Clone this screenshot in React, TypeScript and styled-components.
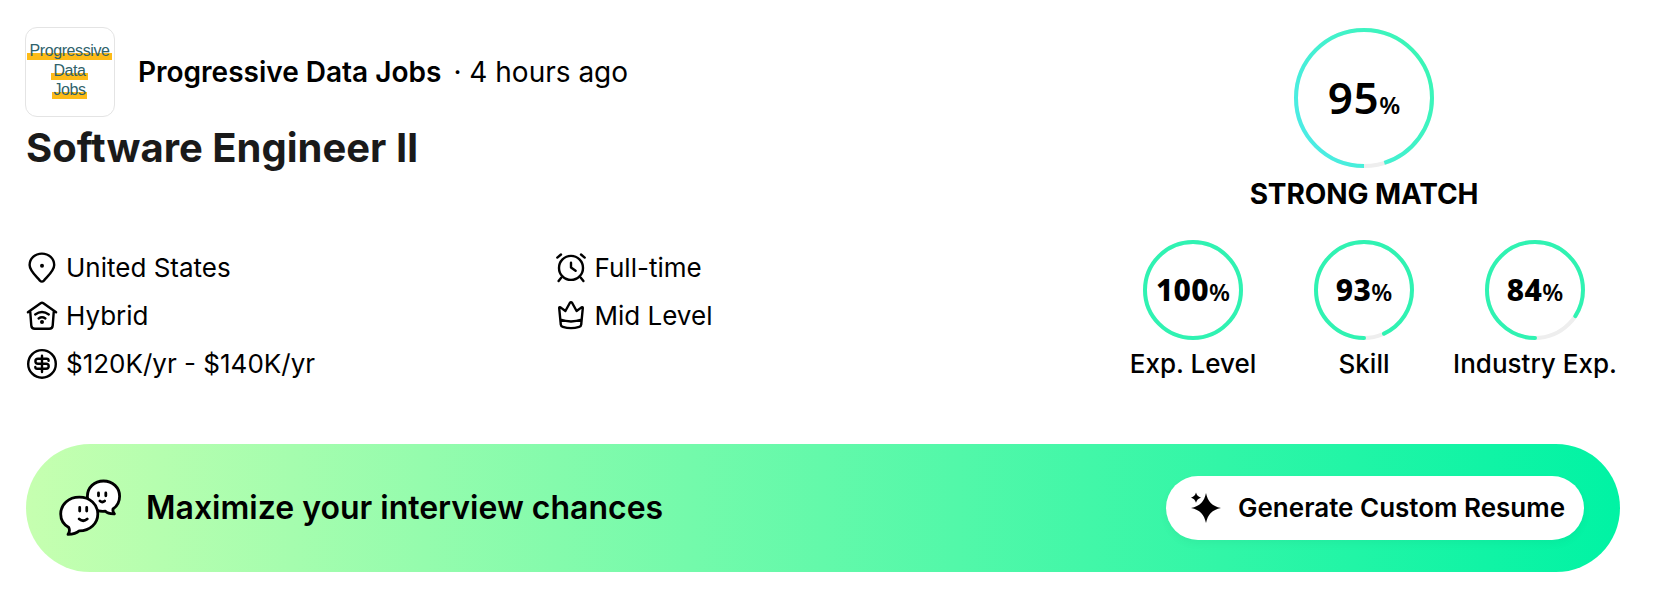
import React from "react";
import styled, { createGlobalStyle } from "styled-components";

const GlobalStyle = createGlobalStyle`
  * { box-sizing: border-box; }
  body {
    margin: 0;
    background: #fff;
    color: #000;
    font-family: Inter, "Liberation Sans", sans-serif;
  }
`;

const Card = styled.main`
  width: 1656px;
  height: 596px;
  padding: 27px 36px 24px 25px;
  display: flex;
  flex-direction: column;
  background: #fff;
`;

const Summary = styled.section`
  display: flex;
  justify-content: space-between;
  height: 417px;
`;

const JobInfo = styled.div`
  display: flex;
  flex-direction: column;
`;

const Company = styled.header`
  display: flex;
  align-items: center;
  gap: 23px;
  height: 90px;
`;

const Logo = styled.div`
  width: 90px;
  height: 90px;
  padding: 13px 1px 0 0;
  border: 1px solid #e4e4e4;
  border-radius: 12px;
  display: flex;
  flex-direction: column;
  align-items: center;
`;

const LogoLine = styled.span<{ $pad: number }>`
  padding: 0 ${(p) => p.$pad}px;
  height: 19.5px;
  line-height: 20px;
  font-family: "Liberation Sans", Arial, sans-serif;
  font-size: 16px;
  letter-spacing: -0.4px;
  color: #2f626b;
  background: linear-gradient(#fdbb17, #fdbb17) 0 12px / 100% 7px no-repeat;
`;

const CompanyLine = styled.p`
  margin: 0;
  display: flex;
  gap: 12px;
  font-size: 28px;
  line-height: 36px;
`;

const CompanyName = styled.strong`
  font-weight: 600;
`;

const Title = styled.h1`
  margin: 7px 0 0 1px;
  font-size: 40px;
  line-height: 48px;
  font-weight: 700;
  color: #1a1a1a;
`;

const Facts = styled.div`
  margin: 72px 0 0 1px;
  display: grid;
  grid-template-columns: 528.5px auto;
  grid-auto-rows: 48px;
`;

const Fact = styled.div`
  display: flex;
  align-items: center;
  gap: 8px;
  font-size: 26px;
`;

const FactText = styled.span`
  padding-bottom: 2px;
`;

const LineIcon = styled.svg.attrs({ viewBox: "0 0 32 32" })`
  width: 32px;
  height: 32px;
  fill: none;
  stroke: #000;
  stroke-width: 2.4;
  stroke-linecap: round;
  stroke-linejoin: round;

  .dot {
    fill: #000;
    stroke: none;
  }
`;

const MatchPanel = styled.aside`
  width: 512px;
  padding-top: 1px;
  display: flex;
  flex-direction: column;
  align-items: center;
`;

const Ring = styled.div<{ $size: number }>`
  display: grid;
  place-items: center;
  width: ${(p) => p.$size}px;
  height: ${(p) => p.$size}px;

  > * {
    grid-area: 1 / 1;
  }
`;

const Score = styled.span<{ $large?: boolean }>`
  padding-bottom: ${(p) => (p.$large ? 2 : 0)}px;
  font-family: "Noto Sans", "Open Sans", sans-serif;
  font-size: ${(p) => (p.$large ? 44 : 30)}px;
  font-weight: ${(p) => (p.$large ? 600 : 800)};
  letter-spacing: ${(p) => (p.$large ? 0.5 : 0.4)}px;
  line-height: 1;
  white-space: nowrap;
`;

const Percent = styled.span`
  font-size: 24px;
  font-weight: 600;
  letter-spacing: 0;
`;

const MatchLabel = styled.div`
  margin-top: 8px;
  font-size: 28px;
  line-height: 36px;
  font-weight: 700;
  letter-spacing: -0.1px;
`;

const Breakdown = styled.div`
  margin-top: 28px;
  display: flex;
  gap: 1px;
`;

const Metric = styled.div`
  width: 170px;
  display: flex;
  flex-direction: column;
  align-items: center;
`;

const MetricLabel = styled.span`
  line-height: 48px;
  font-size: 26px;
  font-weight: 500;
  white-space: nowrap;
`;

const Banner = styled.section`
  margin-left: 1px;
  height: 128px;
  padding: 0 36px 0 32px;
  border-radius: 64px;
  background: linear-gradient(90deg, #c6ffb0 0%, #00f3a4 100%);
  display: flex;
  align-items: center;
`;

const BannerText = styled.p`
  flex: 1;
  margin: 0 0 0 24px;
  padding-bottom: 2px;
  font-size: 32px;
  font-weight: 600;
`;

const ResumeButton = styled.button`
  width: 418px;
  height: 64px;
  padding: 0 0 0 24px;
  border: 0;
  border-radius: 32px;
  background: #fff;
  box-shadow: 0 4px 8px rgba(0, 0, 0, 0.04);
  display: flex;
  align-items: center;
  gap: 16px;
  color: #000;
  font-family: inherit;
  font-size: 26px;
  font-weight: 600;
  white-space: nowrap;
`;

const ButtonText = styled.span`
  padding-bottom: 2px;
`;

type ProgressRingProps = { value: number; size: number; large?: boolean };

function ProgressRing({ value, size, large }: ProgressRingProps) {
  const c = size / 2;
  const r = c - 2;
  const length = 2 * Math.PI * r;
  return (
    <Ring $size={size}>
      <svg width={size} height={size} fill="none" strokeWidth={4}>
        {large && (
          <defs>
            <linearGradient id="ringLarge" x1="1" y1="1" x2="0.4" y2="0">
              <stop offset="0" stopColor="#4eebec" />
              <stop offset="1" stopColor="#3af6b8" />
            </linearGradient>
          </defs>
        )}
        <circle cx={c} cy={c} r={r} stroke="#eee" />
        <circle
          cx={c}
          cy={c}
          r={r}
          stroke={large ? "url(#ringLarge)" : "#2ff3b2"}
          strokeLinecap={large ? "butt" : "round"}
          strokeDasharray={`${(length * value) / 100} ${length}`}
          transform={`rotate(90 ${c} ${c})`}
        />
      </svg>
      <Score $large={large}>
        {value}
        <Percent>%</Percent>
      </Score>
    </Ring>
  );
}

const PinIcon = () => (
  <LineIcon>
    <path d="M15.9 1.6C22.9 1.6 28.2 6.6 28.2 13C28.2 18.6 22.6 23.2 17.9 28.6Q15.9 30.6 13.9 28.6C9.2 23.2 3.6 18.6 3.6 13C3.6 6.6 8.9 1.6 15.9 1.6Z" />
    <circle className="dot" cx="16" cy="13.7" r="2" />
  </LineIcon>
);

const HomeWifiIcon = () => (
  <LineIcon>
    <path d="M1.9 12.3L14.6 3.2Q16 2.2 17.4 3.2L30.1 12.3M4.2 11.2L5.3 25.6Q5.6 28.8 8.8 28.8H23.2Q26.4 28.8 26.7 25.6L27.8 11.2" />
    <path d="M9.2 14.4Q16 9.6 22.8 14.4M12.6 18.4Q16 16 19.4 18.4" />
    <circle className="dot" cx="16" cy="22.1" r="2" />
  </LineIcon>
);

const DollarIcon = () => (
  <LineIcon>
    <circle cx="16" cy="15.9" r="13.8" />
    <path d="M22.6 12.8V12.5Q22.6 10.7 20.8 10.7H12Q9.4 10.7 9.4 13.2T12 15.7H20Q22.7 15.7 22.7 18.2T20 20.7H11.2Q9.3 20.7 9.3 18.9M16 7.7V24" />
  </LineIcon>
);

const AlarmIcon = () => (
  <LineIcon>
    <circle cx="16" cy="15.9" r="12" />
    <path d="M16 10.8V15.6L20.6 18.8M2.3 5.6L6 2.5M29.7 5.6L26 2.5M3.6 29L6.4 25.4M28.4 29L25.6 25.4" />
  </LineIcon>
);

const CrownIcon = () => (
  <LineIcon>
    <path d="M4.2 8.2Q4 6.5 5.5 7.4L10.4 11L14.8 3Q16 1.3 17.2 3L21.6 11L26.5 7.4Q28 6.5 27.8 8.2L26.2 24.6Q26 26.4 24.2 26.9Q16 29.4 7.8 26.9Q6 26.4 5.8 24.6ZM5.4 19.7Q16 23.2 26.6 19.7" />
  </LineIcon>
);

const ChatFacesIcon = () => (
  <svg width="64" height="60" viewBox="0 0 64 60" fill="none" stroke="#000" strokeWidth="2.8" strokeLinecap="round" strokeLinejoin="round">
    <path fill="#fff" d="M45.5 3C54.7 3 61.6 9.6 61.6 18.2C61.6 23.6 58.8 28.3 55 31Q54.4 33.4 56.4 35.8Q50 36 47.4 33.2C37 34.5 29.4 27.6 29.4 18.2C29.4 9.6 36.3 3 45.5 3Z" />
    <path fill="#fff" d="M21.3 19.2C32 19.2 39.8 26.5 39.8 36C39.8 45.5 32 52.8 21.3 52.8Q17.6 56.3 10 56.4Q12.4 53.2 10.8 49.5C5.5 46.5 2.7 41.8 2.7 36C2.7 26.5 10.6 19.2 21.3 19.2Z" />
    <path d="M21.7 29.5V33M28.7 29.5V33M21.2 41Q25.2 44.4 29.2 41M40.5 15V17.8M47.8 15V17.8M42 23Q44.3 24.9 46.6 23" />
  </svg>
);

const SparkleIcon = () => (
  <svg width="32" height="32" viewBox="0 0 32 32" fill="#000">
    <path d="M16 1C17.8 9.6 22 14 31 16C22 18 17.8 22.4 16 31C14.2 22.4 10 18 1 16C10 14 14.2 9.6 16 1Z" />
    <path d="M6 0.6C6.9 3.6 8 4.8 11 5.7C8 6.6 6.9 7.8 6 10.8C5.1 7.8 4 6.6 1 5.7C4 4.8 5.1 3.6 6 0.6Z" />
  </svg>
);

const facts = [
  { Icon: PinIcon, text: "United States" },
  { Icon: AlarmIcon, text: "Full-time" },
  { Icon: HomeWifiIcon, text: "Hybrid" },
  { Icon: CrownIcon, text: "Mid Level" },
  { Icon: DollarIcon, text: "$120K/yr - $140K/yr" },
];

const metrics = [
  { label: "Exp. Level", value: 100 },
  { label: "Skill", value: 93 },
  { label: "Industry Exp.", value: 84 },
];

export default function App() {
  return (
    <>
      <GlobalStyle />
      <Card>
        <Summary>
          <JobInfo>
            <Company>
              <Logo>
                <LogoLine $pad={2}>Progressive</LogoLine>
                <LogoLine $pad={2}>Data</LogoLine>
                <LogoLine $pad={1.5}>Jobs</LogoLine>
              </Logo>
              <CompanyLine>
                <CompanyName>Progressive Data Jobs</CompanyName>
                <span>· 4 hours ago</span>
              </CompanyLine>
            </Company>
            <Title>Software Engineer II</Title>
            <Facts>
              {facts.map(({ Icon, text }) => (
                <Fact key={text}>
                  <Icon />
                  <FactText>{text}</FactText>
                </Fact>
              ))}
            </Facts>
          </JobInfo>
          <MatchPanel>
            <ProgressRing value={95} size={140} large />
            <MatchLabel>STRONG MATCH</MatchLabel>
            <Breakdown>
              {metrics.map((m) => (
                <Metric key={m.label}>
                  <ProgressRing value={m.value} size={100} />
                  <MetricLabel>{m.label}</MetricLabel>
                </Metric>
              ))}
            </Breakdown>
          </MatchPanel>
        </Summary>
        <Banner>
          <ChatFacesIcon />
          <BannerText>Maximize your interview chances</BannerText>
          <ResumeButton>
            <SparkleIcon />
            <ButtonText>Generate Custom Resume</ButtonText>
          </ResumeButton>
        </Banner>
      </Card>
    </>
  );
}
